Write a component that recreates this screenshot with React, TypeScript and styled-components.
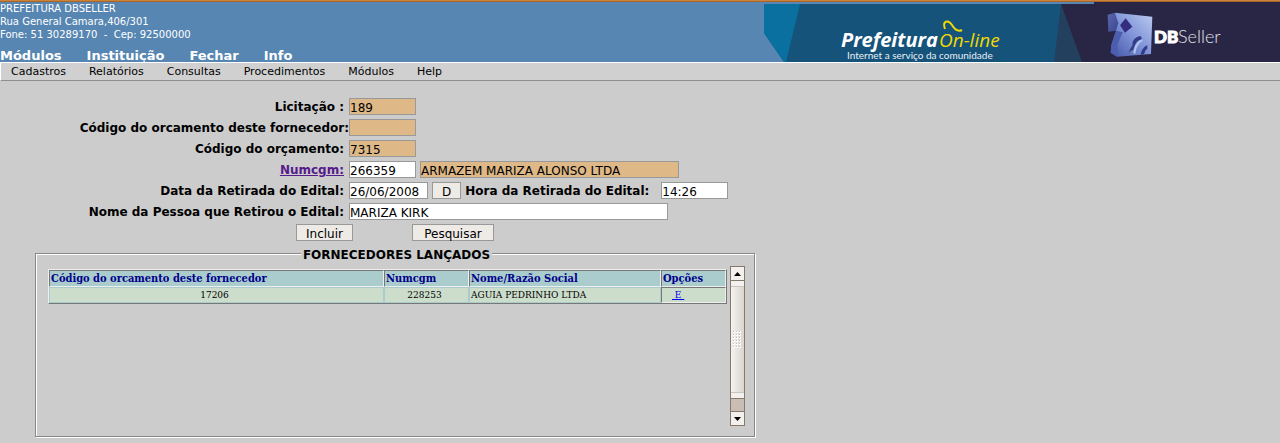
import React from "react";
import styled, { createGlobalStyle } from "styled-components";

const GlobalStyle = createGlobalStyle`
  * { box-sizing: border-box; }
  body {
    margin: 0;
    background: #cccccc;
    color: #000;
    font: 12px/15px "DejaVu Sans", sans-serif;
  }
`;

const Header = styled.header`
  display: flex;
  justify-content: space-between;
  height: 62px;
  padding-top: 1px;
  border-top: 1px solid #cd8337;
  box-shadow: inset 0 1px 0 #a8662f;
  background: #5786b2;
  color: #fff;
`;

const HeaderInfo = styled.div`
  display: flex;
  flex-direction: column;
  justify-content: space-between;
`;

const Address = styled.address`
  font-size: 10px;
  line-height: 13px;
  font-style: normal;
  white-space: pre;
`;

const TopNav = styled.nav`
  display: flex;
  gap: 25px;
  a {
    color: #fff;
    font-size: 13px;
    line-height: 12px;
    font-weight: bold;
    text-decoration: none;
  }
`;

const Banner = styled.svg`
  flex: none;
  width: 516px;
  height: 60px;
`;

const MenuBar = styled.nav`
  display: flex;
  gap: 23px;
  height: 19px;
  padding-left: 10px;
  background: #d0d0d0;
  border: 1px solid #fff;
  border-right: 0;
  border-bottom-color: #909090;
  a {
    color: #000;
    font-size: 11px;
    line-height: 17px;
    text-decoration: none;
  }
`;

const Main = styled.main`
  max-width: 755px;
  padding: 16px 0 6px 35px;
`;

const FormGrid = styled.div`
  display: grid;
  grid-template-columns: 314px 1fr;
  row-gap: 2px;
`;

const Label = styled.label<{ $flush?: boolean }>`
  padding: 2px ${(p) => (p.$flush ? 0 : 5)}px 0 0;
  font-weight: bold;
  line-height: 17px;
  text-align: right;
  white-space: nowrap;
  a { color: #551a8b; }
`;

const Fields = styled.div`
  display: flex;
  align-items: center;
  gap: 4px;
  height: 19px;
  white-space: nowrap;
`;

const Field = styled.input<{ $width: number }>`
  width: ${(p) => p.$width}px;
  height: 17px;
  padding: 2px 0 0;
  border: 1px solid #999;
  background: #fff;
  color: #000;
  font: 12px "DejaVu Sans", sans-serif;
  &[readonly] { background: #deb887; }
`;

const InlineLabel = styled.label`
  min-width: 192px;
  padding-top: 2px;
  font-weight: bold;
`;

const Button = styled.button<{ $minWidth?: number }>`
  min-width: ${(p) => p.$minWidth || 0}px;
  height: 17px;
  padding: 2px 9px 0;
  border: 1px solid #999;
  background: #eeebe7;
  color: #000;
  font: 12px/14px "DejaVu Sans", sans-serif;
`;

const Actions = styled.div`
  display: flex;
  justify-content: center;
  gap: 59px;
  padding: 3px 0 4px;
`;

const Group = styled.fieldset`
  min-width: 0;
  margin: 0;
  padding: 4px 9px 10px 12px;
  border: 1px solid #888;
  box-shadow: 1px 1px 0 #fff, inset 1px 1px 0 #fff;
`;

const Legend = styled.legend`
  margin: 0 auto;
  padding: 3px 2px 0;
  background: #ccc;
  font-weight: bold;
  line-height: 14px;
`;

const ListArea = styled.div`
  display: flex;
  justify-content: space-between;
  align-items: flex-start;
  height: 160px;
`;

const Suppliers = styled.table`
  flex: 1;
  max-width: 679px;
  margin-top: 3px;
  border: 1px solid #777;
  border-top-color: #eee;
  border-left-color: #eee;
  border-spacing: 0;
  table-layout: fixed;
  background: #aacccc;
  font: 10px/13px "DejaVu Serif Condensed", "DejaVu Serif", serif;
`;

const HeadCell = styled.th<{ $width?: number }>`
  width: ${(p) => (p.$width ? `${p.$width}px` : "auto")};
  padding: 1px;
  border: 1px solid #eee;
  border-top-color: #777;
  border-left-color: #777;
  color: #00008b;
  font-size: 11px;
  text-align: left;
`;

const Cell = styled.td<{ $align?: string; $inset?: boolean }>`
  padding: 0 1px 1px ${(p) => (p.$inset ? 10 : 1)}px;
  border: 1px solid ${(p) => (p.$inset ? "#eee" : "#aacccc")};
  border-top-color: ${(p) => (p.$inset ? "#777" : "#aacccc")};
  border-left-color: ${(p) => (p.$inset ? "#777" : "#aacccc")};
  background: #ccddcc;
  text-align: ${(p) => p.$align || "left"};
  ${(p) => (p.$align === "center" ? "padding-right: 5px;" : "")}
  a { color: #0000ee; }
`;

const ScrollBar = styled.div`
  display: flex;
  flex-direction: column;
  width: 15px;
  height: 160px;
  border: 1px solid #85786c;
  background: #c9beb5;
`;

const ScrollButton = styled.button`
  display: flex;
  align-items: center;
  justify-content: center;
  width: 13px;
  height: 13px;
  padding: 0;
  border: 0;
  background: #f3f0ed;
`;

const Thumb = styled.div`
  display: flex;
  align-items: center;
  justify-content: center;
  height: 119px;
  border: solid #85786c;
  border-width: 1px 0;
  background:
    linear-gradient(#f3f0ed 5px, #cbc5bf 5px, #cbc5bf 6px, transparent 6px, transparent 111px, #cbc5bf 111px, #cbc5bf 112px, #f3f0ed 112px),
    linear-gradient(90deg, #f5f2ef, #dcd5ce);
`;

const Grip = styled.div`
  width: 9px;
  height: 18px;
  background:
    conic-gradient(from 270deg at 1px 1px, #c0b8b0 90deg, transparent 0) 0 0 / 3px 3px,
    conic-gradient(from 270deg at 2px 2px, #fff 90deg, transparent 0) 0 0 / 3px 3px;
`;

const DownSlot = styled.div`
  margin-top: auto;
  border-top: 1px solid #85786c;
`;

export default function App() {
  return (
    <>
      <GlobalStyle />
      <Header>
        <HeaderInfo>
          <Address>{"PREFEITURA DBSELLER\nRua General Camara,406/301\nFone: 51 30289170  -  Cep: 92500000"}</Address>
          <TopNav>
            <a href="#modulos">Módulos</a>
            <a href="#instituicao">Instituição</a>
            <a href="#fechar">Fechar</a>
            <a href="#info">Info</a>
          </TopNav>
        </HeaderInfo>
        <Banner viewBox="0 0 516 60" role="img" aria-label="Prefeitura On-line DBSeller">
          <defs>
            <linearGradient id="cube" x1="0" y1="1" x2="1" y2="0">
              <stop offset="0" stopColor="#4254a8" />
              <stop offset="0.5" stopColor="#8094d8" />
              <stop offset="1" stopColor="#bccbf0" />
            </linearGradient>
            <linearGradient id="side" x1="0" y1="0" x2="1" y2="1">
              <stop offset="0" stopColor="#5a68a8" />
              <stop offset="1" stopColor="#3a4696" />
            </linearGradient>
          </defs>
          <path d="M0 2H330V60H20L0 31Z" fill="#15537b" />
          <path d="M0 2H36L22 60H20L0 31Z" fill="#0a70a0" />
          <path d="M297 2H330V60H290Z" fill="#23415f" />
          <path d="M297 2H330V0H516V60H318Z" fill="#282644" />
          <text x="77" y="45" fill="#fff" fontFamily="Open Sans, sans-serif" fontSize="20" fontWeight="700" fontStyle="italic">Prefeitura</text>
          <text x="175" y="45" fill="#f0d800" fontFamily="Open Sans, sans-serif" fontSize="19" fontStyle="italic">On-line</text>
          <path d="M181 27C178 19 184 17 188 23C191 28 194 30 198 28" fill="none" stroke="#f0d800" strokeWidth="2" />
          <text x="83" y="57" fill="#e8f0f5" fontFamily="Lato, sans-serif" fontSize="10">Internet a serviço da comunidade</text>
          <g transform="translate(236 -2) scale(0.3333)">
            <path d="M345 38L457 50L453 162L350 170L332 158L334 135L348 92Z" fill="url(#cube)" />
            <path d="M323 44L345 38L355 70L348 92L325 95Z" fill="url(#side)" />
            <path d="M348 92L368 97L352 135L354 170L332 158L334 135Z" fill="#4c5cae" />
            <path d="M377 55L397 80L375 98L360 76Z" fill="#342d80" />
            <path d="M385 162C388 155 392 150 400 150C404 135 410 120 426 118L422 108C404 112 396 122 398 136C392 144 388 152 385 162Z" fill="#343c88" />
            <path d="M400 160C402 140 410 124 426 118L428 123C416 130 409 142 406 161Z" fill="#b3c3ef" />
            <path d="M422 164C424 150 432 140 442 136L442 146C436 150 434 156 432 163Z" fill="#343c88" />
          </g>
          <text x="390" y="41" fill="#fff" fontFamily="Lato, sans-serif" fontSize="17" fontWeight="900" stroke="#fff" strokeWidth="1">DB</text>
          <text x="414" y="41" fill="#e0e0ea" fontFamily="Lato, sans-serif" fontSize="18" fontWeight="300">Seller</text>
        </Banner>
      </Header>
      <MenuBar>
        <a href="#cadastros">Cadastros</a>
        <a href="#relatorios">Relatórios</a>
        <a href="#consultas">Consultas</a>
        <a href="#procedimentos">Procedimentos</a>
        <a href="#modulos-menu">Módulos</a>
        <a href="#help">Help</a>
      </MenuBar>
      <Main>
        <form onSubmit={(e) => e.preventDefault()}>
          <FormGrid>
            <Label htmlFor="licitacao">Licitação :</Label>
            <Fields><Field id="licitacao" $width={67} readOnly defaultValue="189" /></Fields>
            <Label htmlFor="codfor" $flush>Código do orcamento deste fornecedor:</Label>
            <Fields><Field id="codfor" $width={67} readOnly /></Fields>
            <Label htmlFor="codorc">Código do orçamento:</Label>
            <Fields><Field id="codorc" $width={67} readOnly defaultValue="7315" /></Fields>
            <Label htmlFor="numcgm"><a href="#numcgm">Numcgm:</a></Label>
            <Fields>
              <Field id="numcgm" $width={67} defaultValue="266359" />
              <Field aria-label="Nome" $width={259} readOnly defaultValue="ARMAZEM MARIZA ALONSO LTDA" />
            </Fields>
            <Label htmlFor="data">Data da Retirada do Edital:</Label>
            <Fields>
              <Field id="data" $width={79} defaultValue="26/06/2008" />
              <Button type="button">D</Button>
              <InlineLabel htmlFor="hora">Hora da Retirada do Edital:</InlineLabel>
              <Field id="hora" $width={67} defaultValue="14:26" />
            </Fields>
            <Label htmlFor="pessoa">Nome da Pessoa que Retirou o Edital:</Label>
            <Fields><Field id="pessoa" $width={319} defaultValue="MARIZA KIRK" /></Fields>
          </FormGrid>
          <Actions>
            <Button type="submit">Incluir</Button>
            <Button type="button" $minWidth={82}>Pesquisar</Button>
          </Actions>
          <Group>
            <Legend>FORNECEDORES LANÇADOS</Legend>
            <ListArea>
              <Suppliers>
                <thead>
                  <tr>
                    <HeadCell>Código do orcamento deste fornecedor</HeadCell>
                    <HeadCell $width={85}>Numcgm</HeadCell>
                    <HeadCell $width={192}>Nome/Razão Social</HeadCell>
                    <HeadCell $width={65}>Opções</HeadCell>
                  </tr>
                </thead>
                <tbody>
                  <tr>
                    <Cell $align="center">17206</Cell>
                    <Cell $align="center">228253</Cell>
                    <Cell>AGUIA PEDRINHO LTDA</Cell>
                    <Cell $inset><a href="#excluir">&nbsp;E&nbsp;</a></Cell>
                  </tr>
                </tbody>
              </Suppliers>
              <ScrollBar>
                <ScrollButton type="button" aria-label="Subir">
                  <svg width="7" height="4"><path d="M0 4L3.5 0L7 4Z" /></svg>
                </ScrollButton>
                <Thumb><Grip /></Thumb>
                <DownSlot>
                  <ScrollButton type="button" aria-label="Descer">
                    <svg width="7" height="4"><path d="M0 0L3.5 4L7 0Z" /></svg>
                  </ScrollButton>
                </DownSlot>
              </ScrollBar>
            </ListArea>
          </Group>
        </form>
      </Main>
    </>
  );
}
